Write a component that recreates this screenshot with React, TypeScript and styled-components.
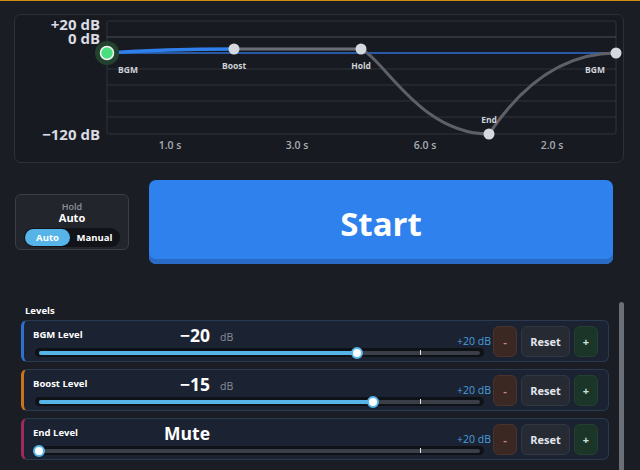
import React from "react";
import styled, { createGlobalStyle } from "styled-components";

const GlobalStyle = createGlobalStyle`
  html, body {
    margin: 0;
    padding: 0;
    background: #1a1d24;
  }
  body {
    font-family: "Open Sans", "Noto Sans", sans-serif;
    color: #ffffff;
  }
`;

const Page = styled.div`
  height: 470px;
  box-sizing: border-box;
  border-top: 1px solid #d08b12;
  padding: 13px 16px 0 14px;
  overflow: hidden;
`;

const ChartPanel = styled.div`
  height: 149px;
  box-sizing: border-box;
  border: 1px solid #2c3038;
  border-radius: 7px;
  background: #171a21;
  svg {
    display: block;
  }
`;

const ControlRow = styled.div`
  margin-top: 17px;
  display: flex;
  align-items: center;
  gap: 20px;
  padding: 0 11px 0 1px;
`;

const HoldBox = styled.div`
  width: 114px;
  height: 56px;
  box-sizing: border-box;
  border: 1px solid #3a3e46;
  border-radius: 6px;
  background: #22252c;
  display: flex;
  flex-direction: column;
  align-items: center;
  padding-top: 6px;
`;

const HoldTitle = styled.div`
  font-size: 9px;
  font-weight: 600;
  line-height: 11px;
  color: #8e939b;
`;

const HoldValue = styled.div`
  font-size: 11px;
  font-weight: 700;
  line-height: 12px;
  color: #ffffff;
`;

const Toggle = styled.div`
  margin-top: 4px;
  width: 96px;
  height: 19px;
  box-sizing: border-box;
  padding: 1px;
  border-radius: 10px;
  background: #111318;
  display: flex;
`;

const ToggleOption = styled.div<{ $active?: boolean }>`
  flex: ${(p) => (p.$active ? "0 0 45px" : "1")};
  border-radius: 9px;
  background: ${(p) => (p.$active ? "#56b4e9" : "transparent")};
  font-size: 9.5px;
  font-weight: 700;
  line-height: 17px;
  text-align: center;
  color: #ffffff;
`;

const StartButton = styled.button`
  flex: 1;
  height: 84px;
  border: none;
  border-radius: 7px;
  background: #2f81ee;
  box-shadow: inset 0 -5px 0 #2a6bc6;
  color: #ffffff;
  font-family: inherit;
  font-size: 33px;
  font-weight: 700;
  padding: 2px 0 0;
`;

const LevelsSection = styled.div`
  margin-top: 38px;
  height: 168px;
  display: flex;
`;

const LevelsContent = styled.div`
  flex: 1;
  padding: 3px 0 0 7px;
  display: flex;
  flex-direction: column;
  gap: 7px;
`;

const LevelsTitle = styled.div`
  font-size: 9.5px;
  font-weight: 700;
  line-height: 12px;
  margin: 0 0 -4px 4px;
`;

const ScrollThumb = styled.div`
  margin-left: 10px;
  width: 5px;
  height: 180px;
  border-radius: 3px;
  background: #6b6f78;
`;

const LevelRow = styled.div<{ $accent: string }>`
  height: 42px;
  box-sizing: border-box;
  border: 1px solid #2a3a50;
  border-left: 3px solid ${(p) => p.$accent};
  border-radius: 6px;
  background: #1b2333;
  display: flex;
  align-items: center;
  padding-right: 10px;
`;

const LevelMain = styled.div`
  flex: 1;
  align-self: stretch;
  padding: 4px 0 0 9px;
  display: flex;
  flex-direction: column;
`;

const TopLine = styled.div`
  height: 20px;
  display: flex;
  align-items: center;
`;

const LevelLabel = styled.div`
  width: 120px;
  font-size: 9.5px;
  font-weight: 700;
  margin-top: -2px;
`;

const LevelValue = styled.div`
  width: 57px;
  text-align: right;
  font-size: 17.5px;
  font-weight: 700;
  line-height: 20px;
`;

const LevelUnit = styled.div`
  margin-left: 10px;
  padding-top: 3px;
  font-size: 10.5px;
  color: #8a8f98;
`;

const LevelMax = styled.div`
  margin-left: auto;
  align-self: flex-end;
  font-size: 10.5px;
  line-height: 12px;
  color: #4a9fdc;
  margin-bottom: -2px;
`;

const Track = styled.div`
  position: relative;
  margin: 3px 7px 0 2px;
  height: 9px;
  border-radius: 5px;
  background: #0e1116;
`;

const Rail = styled.div`
  position: absolute;
  left: 4px;
  right: 4px;
  top: 2.5px;
  height: 4px;
  border-radius: 2px;
  background: #3a3e47;
`;

const Fill = styled.div`
  position: absolute;
  left: 4px;
  top: 2.5px;
  height: 4px;
  border-radius: 2px;
  background: #56b4e9;
`;

const ZeroTick = styled.div`
  position: absolute;
  top: 2px;
  width: 1px;
  height: 5px;
  background: #e6e8ec;
`;

const Thumb = styled.div`
  position: absolute;
  top: -1.5px;
  width: 12px;
  height: 12px;
  box-sizing: border-box;
  margin-left: -6px;
  border-radius: 50%;
  background: #ffffff;
  border: 2px solid #56b4e9;
`;

const ButtonGroup = styled.div`
  display: flex;
  gap: 4px;
  margin-left: 2px;
`;

const StepButton = styled.button<{ $kind: "minus" | "reset" | "plus" }>`
  height: 31px;
  width: ${(p) => (p.$kind === "reset" ? "49px" : "24px")};
  box-sizing: border-box;
  border-radius: 6px;
  padding: 0;
  font-family: inherit;
  font-weight: 700;
  font-size: ${(p) => (p.$kind === "reset" ? "11px" : "11px")};
  background: ${(p) =>
    p.$kind === "minus" ? "#3c2822" : p.$kind === "plus" ? "#1b3629" : "#252a33"};
  border: 1px solid
    ${(p) =>
      p.$kind === "minus" ? "#4b332d" : p.$kind === "plus" ? "#24412f" : "#323842"};
  color: ${(p) =>
    p.$kind === "minus" ? "#c98a7a" : p.$kind === "plus" ? "#cfe3d5" : "#e3e6ea"};
`;

const MIN_DB = -120;
const MAX_DB = 20;

type Level = { name: string; value: number; accent: string };

const levels: Level[] = [
  { name: "BGM Level", value: -20, accent: "#2f6fd0" },
  { name: "Boost Level", value: -15, accent: "#c8741c" },
  { name: "End Level", value: -120, accent: "#9c2a5a" },
];

const pos = (db: number) => {
  const f = (db - MIN_DB) / (MAX_DB - MIN_DB);
  return `calc(4px + ${f} * (100% - 4px))`;
};

const Envelope = () => {
  const grid = "#2e323a";
  const labelStyle = { fontFamily: "Open Sans, sans-serif", fontWeight: 700 };
  return (
    <svg width="608" height="147" viewBox="0 0 608 147">
      <g transform="translate(-15,-15)">
        <rect x="107" y="21" width="509" height="113" rx="2" fill="none" stroke={grid} />
        <line x1="107" y1="37" x2="616" y2="37" stroke="#4a4e56" />
        {[69, 85, 101, 117].map((y) => (
          <line key={y} x1="107" y1={y} x2="616" y2={y} stroke={grid} />
        ))}
        <line x1="107" y1="53" x2="616" y2="53" stroke="#2f6fd0" strokeWidth="1.5" />

        <g style={labelStyle} fontSize="15" fill="#d9dce1" textAnchor="end">
          <text x="100" y="30">+20 dB</text>
          <text x="100" y="43.5">0 dB</text>
          <text x="100" y="139.5">−120 dB</text>
        </g>
        <g fontFamily="Open Sans, sans-serif" fontWeight="600" fontSize="10.5" fill="#a8acb4" textAnchor="middle">
          <text x="170" y="149">1.0 s</text>
          <text x="297" y="149">3.0 s</text>
          <text x="425" y="149">6.0 s</text>
          <text x="552" y="149">2.0 s</text>
        </g>

        <path d="M107 53 C150 50, 190 49, 234 49" fill="none" stroke="#2f80ed" strokeWidth="3.5" strokeLinecap="round" />
        <path d="M234 49 L361 49" fill="none" stroke="#6b6e76" strokeWidth="3" />
        <path d="M361 49 C385 60, 420 134, 489 134" fill="none" stroke="#5d6068" strokeWidth="3" />
        <path d="M489 134 C515 95, 555 53, 616 53" fill="none" stroke="#5d6068" strokeWidth="3" />

        <circle cx="107" cy="53" r="12" fill="#23422e" />
        <circle cx="107" cy="53" r="6.5" fill="#4ade80" stroke="#f2f4f6" strokeWidth="1.5" />
        {[
          [234, 49],
          [361, 49],
          [489, 134],
          [616, 53],
        ].map(([x, y]) => (
          <circle key={x} cx={x} cy={y} r="5.5" fill="#d5d8dd" />
        ))}

        <g style={labelStyle} fontSize="8.5" fill="#d0d3d8" textAnchor="middle">
          <text x="128" y="73">BGM</text>
          <text x="234" y="69">Boost</text>
          <text x="361" y="69">Hold</text>
          <text x="489" y="123">End</text>
          <text x="595" y="73">BGM</text>
        </g>
      </g>
    </svg>
  );
};

const App = () => {
  return (
    <>
      <GlobalStyle />
      <Page>
        <ChartPanel>
          <Envelope />
        </ChartPanel>

        <ControlRow>
          <HoldBox>
            <HoldTitle>Hold</HoldTitle>
            <HoldValue>Auto</HoldValue>
            <Toggle>
              <ToggleOption $active>Auto</ToggleOption>
              <ToggleOption>Manual</ToggleOption>
            </Toggle>
          </HoldBox>
          <StartButton>Start</StartButton>
        </ControlRow>

        <LevelsSection>
          <LevelsContent>
            <LevelsTitle>Levels</LevelsTitle>
            {levels.map((l) => {
              const muted = l.value <= MIN_DB;
              return (
                <LevelRow key={l.name} $accent={l.accent}>
                  <LevelMain>
                    <TopLine>
                      <LevelLabel>{l.name}</LevelLabel>
                      <LevelValue>{muted ? "Mute" : `−${Math.abs(l.value)}`}</LevelValue>
                      {!muted && <LevelUnit>dB</LevelUnit>}
                      <LevelMax>+20 dB</LevelMax>
                    </TopLine>
                    <Track>
                      <Rail />
                      <Fill style={{ width: `calc(${pos(l.value)} - 4px)` }} />
                      <ZeroTick style={{ left: pos(0) }} />
                      <Thumb style={{ left: pos(l.value) }} />
                    </Track>
                  </LevelMain>
                  <ButtonGroup>
                    <StepButton $kind="minus">-</StepButton>
                    <StepButton $kind="reset">Reset</StepButton>
                    <StepButton $kind="plus">+</StepButton>
                  </ButtonGroup>
                </LevelRow>
              );
            })}
          </LevelsContent>
          <ScrollThumb />
        </LevelsSection>
      </Page>
    </>
  );
};

export default App;
